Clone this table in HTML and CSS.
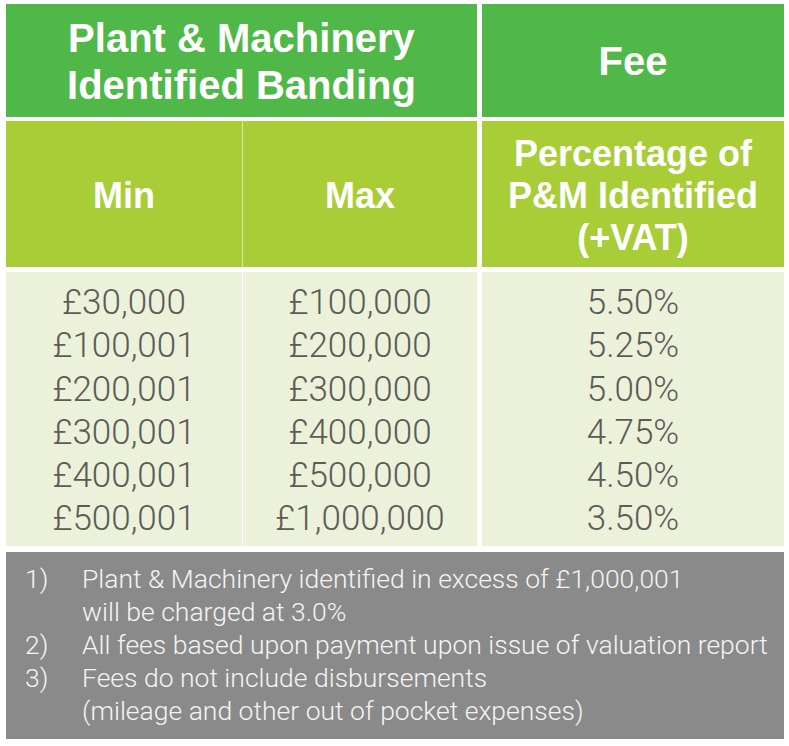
FILE: index.html
```html
<!DOCTYPE html>
<html lang="en">
<head>
<meta charset="utf-8">
<title>Plant &amp; Machinery Fees</title>
<link rel="stylesheet" href="styles.css">
</head>
<body>
<div class="fees">
  <div class="cell head span2">Plant &amp; Machinery<br>Identified Banding</div>
  <div class="cell head col3">Fee</div>

  <div class="cell sub">Min</div>
  <div class="cell sub col2">Max</div>
  <div class="cell sub col3">Percentage of<br>P&amp;M Identified<br>(+VAT)</div>

  <div class="cell data">
    <span>£30,000</span><span>£100,001</span><span>£200,001</span><span>£300,001</span><span>£400,001</span><span>£500,001</span>
  </div>
  <div class="cell data col2">
    <span>£100,000</span><span>£200,000</span><span>£300,000</span><span>£400,000</span><span>£500,000</span><span>£1,000,000</span>
  </div>
  <div class="cell data col3">
    <span>5.50%</span><span>5.25%</span><span>5.00%</span><span>4.75%</span><span>4.50%</span><span>3.50%</span>
  </div>

  <ol class="notes">
    <li><span class="num">1)</span><span class="txt">Plant &amp; Machinery identified in excess of £1,000,001<br>will be charged at 3.0%</span></li>
    <li><span class="num">2)</span><span class="txt">All fees based upon payment upon issue of valuation report</span></li>
    <li><span class="num">3)</span><span class="txt">Fees do not include disbursements<br>(mileage and other out of pocket expenses)</span></li>
  </ol>
</div>
</body>
</html>
```
FILE: styles.css
```css
html, body {
  margin: 0;
  padding: 0;
  background: #ffffff;
}

body {
  font-family: "Liberation Sans", Arial, sans-serif;
}

.fees {
  display: grid;
  grid-template-columns: 236px 235px 307px;
  grid-template-rows: 113px 150px 279px 193px;
  padding: 4px 5px 6px 6px;
  width: 778px;
}

.cell {
  box-sizing: border-box;
  display: flex;
  flex-direction: column;
  align-items: center;
  justify-content: center;
  text-align: center;
}

.col2 {
  border-left: 1px solid #dbe9a8;
}

.col3 {
  margin-left: 5px;
}

.head {
  background: #50b848;
  color: #ffffff;
  font-weight: bold;
  font-size: 40px;
  line-height: 47px;
  padding-top: 2px;
}

.span2 {
  grid-column: 1 / 3;
}

.sub {
  background: #a9cd37;
  color: #ffffff;
  font-weight: bold;
  font-size: 36px;
  line-height: 42px;
  margin-top: 4px;
  padding-top: 4px;
}

.data {
  background: #ecf2da;
  color: #5b5c57;
  font-family: Roboto, "Liberation Sans", sans-serif;
  font-weight: 300;
  font-size: 35px;
  line-height: 43.3px;
  margin-top: 5px;
  justify-content: flex-start;
  padding-top: 9px;
}

.data.col2 {
  border-left-color: #ffffff;
}

.notes {
  grid-column: 1 / 4;
  margin: 6px 0 0 0;
  list-style: none;
  background: #898a89;
  color: #f4f4f4;
  font-family: Roboto, "Liberation Sans", sans-serif;
  font-weight: 300;
  font-size: 26.5px;
  line-height: 33px;
  padding: 10px 0 0 19px;
  box-sizing: border-box;
}

.notes li {
  display: flex;
}

.num {
  width: 57px;
  flex: none;
}

.txt {
  flex: 1;
}
```
